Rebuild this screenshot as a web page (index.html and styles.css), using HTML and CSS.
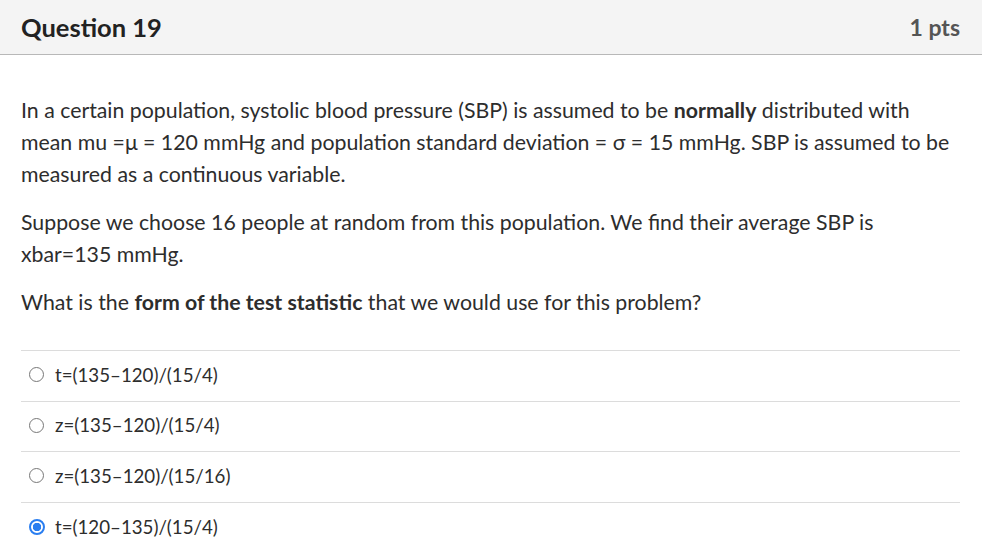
FILE: index.html
```html
<!DOCTYPE html>
<html>
<head>
<meta charset="utf-8">
<link rel="stylesheet" href="styles.css">
</head>
<body>
<div class="question">
  <div class="header">
    <h2 class="title">Question 19</h2>
    <span class="points">1 pts</span>
  </div>
  <div class="content">
    <div class="text">
      <p>In a certain population, systolic blood pressure (SBP) is assumed to be <b>normally</b> distributed with mean mu =μ = 120 mmHg and population standard deviation = σ = 15 mmHg. SBP is assumed to be measured as a continuous variable.</p>
      <p>Suppose we choose 16 people at random from this population. We find their average SBP is xbar=135 mmHg.</p>
      <p>What is the <b>form of the test statistic</b> that we would use for this problem?</p>
    </div>
    <div class="answers">
      <label class="answer"><span class="radio"></span><span class="label">t=(135–120)/(15/4)</span></label>
      <label class="answer"><span class="radio"></span><span class="label">z=(135–120)/(15/4)</span></label>
      <label class="answer"><span class="radio"></span><span class="label">z=(135–120)/(15/16)</span></label>
      <label class="answer"><span class="radio checked"></span><span class="label">t=(120–135)/(15/4)</span></label>
    </div>
  </div>
</div>
</body>
</html>
```
FILE: styles.css
```css
html, body {
  margin: 0;
  padding: 0;
  background: #fff;
}
body {
  font-family: Lato, "Noto Sans", sans-serif;
  color: #2d2d2d;
}
.header {
  height: 54px;
  background: #f4f4f4;
  border-bottom: 1px solid #b8b8b8;
  display: flex;
  align-items: center;
  justify-content: space-between;
  padding: 0 22px 0 21px;
}
.title {
  margin: 0;
  font-size: 25.5px;
  font-weight: 700;
  color: #222;
}
.points {
  font-size: 23px;
  font-weight: 700;
  color: #555;
}
.content {
  padding: 39px 22px 0 21px;
}
.text p {
  margin: 0 0 16px 0;
  font-size: 21.3px;
  line-height: 32px;
  color: #2d2d2d;
}
.text p:last-child {
  margin-bottom: 0;
}
.text b {
  font-weight: 700;
}
.answers {
  margin-top: 32px;
}
.answer {
  display: flex;
  align-items: center;
  box-sizing: border-box;
  height: 50.6px;
  padding-bottom: 2px;
  border-top: 1px solid #dcdcdc;
  padding-left: 8px;
}
.radio {
  width: 15px;
  height: 15px;
  border: 1.5px solid #777;
  border-radius: 50%;
  box-sizing: border-box;
  margin-right: 11px;
  flex: none;
}
.radio.checked {
  border: 2px solid #2a7ef0;
  background: radial-gradient(circle, #2a7ef0 0 4px, #fff 4.5px);
  width: 16px;
  height: 16px;
  margin-left: -0.5px;
  margin-right: 10.5px;
}
.label {
  font-size: 18.7px;
  color: #2d2d2d;
}
```
